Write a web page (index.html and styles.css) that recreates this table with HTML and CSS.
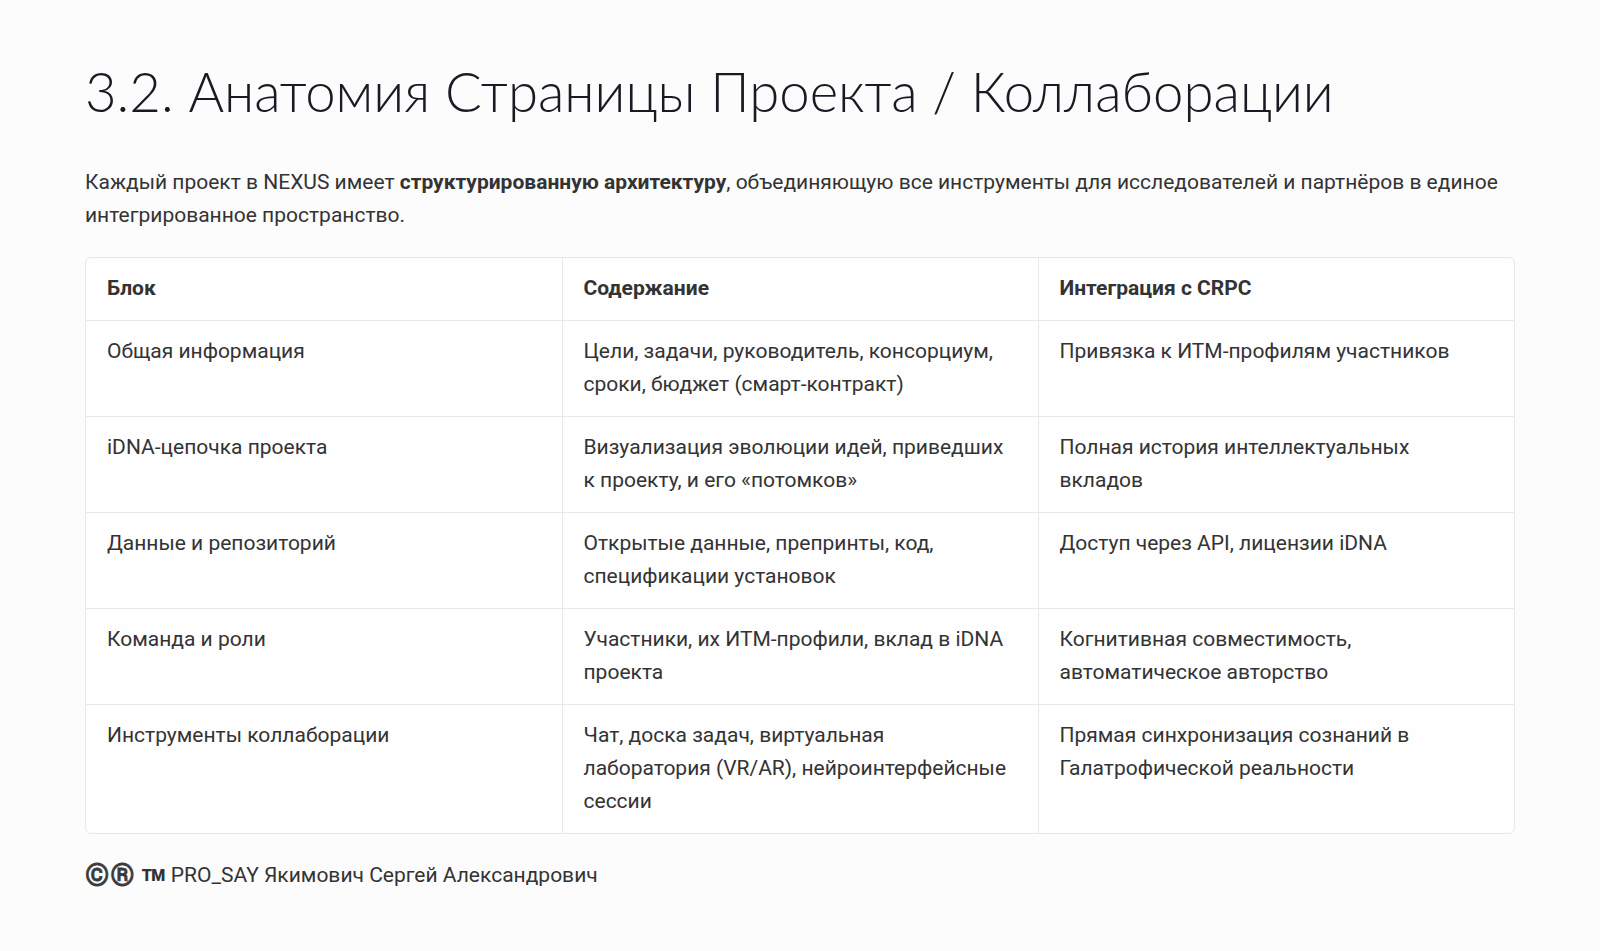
FILE: index.html
```html
<!DOCTYPE html>
<html lang="ru">
<head>
<meta charset="utf-8">
<title>3.2. Анатомия Страницы Проекта / Коллаборации</title>
<link rel="stylesheet" href="styles.css">
</head>
<body>
<main class="page">
  <h2 class="title">3.2. Анатомия Страницы Проекта / Коллаборации</h2>
  <p class="lead">Каждый проект в NEXUS имеет <strong>структурированную архитектуру</strong>, объединяющую все инструменты для исследователей и партнёров в единое интегрированное пространство.</p>
  <div class="table-wrap">
    <table class="grid">
      <thead>
        <tr><th>Блок</th><th>Содержание</th><th>Интеграция с CRPC</th></tr>
      </thead>
      <tbody>
        <tr><td>Общая информация</td><td>Цели, задачи, руководитель, консорциум, сроки, бюджет (смарт-контракт)</td><td>Привязка к ИТМ-профилям участников</td></tr>
        <tr><td>iDNA-цепочка проекта</td><td>Визуализация эволюции идей, приведших к проекту, и его «потомков»</td><td>Полная история интеллектуальных вкладов</td></tr>
        <tr><td>Данные и репозиторий</td><td>Открытые данные, препринты, код, спецификации установок</td><td>Доступ через API, лицензии iDNA</td></tr>
        <tr><td>Команда и роли</td><td>Участники, их ИТМ-профили, вклад в iDNA проекта</td><td>Когнитивная совместимость, автоматическое авторство</td></tr>
        <tr><td>Инструменты коллаборации</td><td>Чат, доска задач, виртуальная лаборатория (VR/AR), нейроинтерфейсные сессии</td><td>Прямая синхронизация сознаний в Галатрофической реальности</td></tr>
      </tbody>
    </table>
  </div>
  <p class="footer"><span class="sym">©</span><span class="sym">®</span><span class="tm">TM</span>PRO_SAY Якимович Сергей Александрович</p>
</main>
</body>
</html>
```

FILE: styles.css
```css
html, body {
  margin: 0;
  padding: 0;
  background: #fcfcfc;
}
body {
  font-family: Roboto, "Liberation Sans", sans-serif;
  color: #333;
}
.page {
  padding: 56px 85px 40px 85px;
}
.title {
  font-family: Lato, "Open Sans", sans-serif;
  font-weight: 300;
  font-size: 54.5px;
  line-height: 70px;
  color: #1a1a24;
  margin: 0 0 40px 0;
  letter-spacing: 0;
}
.lead {
  font-size: 21px;
  line-height: 33px;
  margin: 0 0 25px 0;
}
.lead strong {
  font-weight: 700;
}
.table-wrap {
  border: 1px solid #e8e8e8;
  border-radius: 6px;
  overflow: hidden;
  background: #fefefe;
}
.grid {
  width: 100%;
  border-collapse: collapse;
  table-layout: fixed;
  font-size: 21px;
  line-height: 33px;
}
.grid th, .grid td {
  text-align: left;
  vertical-align: top;
  padding: 14px 21px 15px 21px;
  border-right: 1px solid #e8e8e8;
  border-bottom: 1px solid #e8e8e8;
}
.grid th:last-child, .grid td:last-child {
  border-right: none;
}
.grid tbody tr:last-child td {
  border-bottom: none;
}
.grid th {
  font-weight: 700;
}
.footer {
  margin: 25px 0 0 0;
  font-size: 21px;
  line-height: 33px;
  display: flex;
  align-items: center;
}
.sym {
  font-size: 31px;
  font-weight: 700;
  color: #3a3a3a;
  margin-right: 1px;
  line-height: 33px;
  -webkit-text-stroke: 0.8px #3a3a3a;
}
.tm {
  font-size: 16px;
  font-weight: 900;
  margin: 0 6px 0 6px;
  letter-spacing: -0.5px;
}
```
